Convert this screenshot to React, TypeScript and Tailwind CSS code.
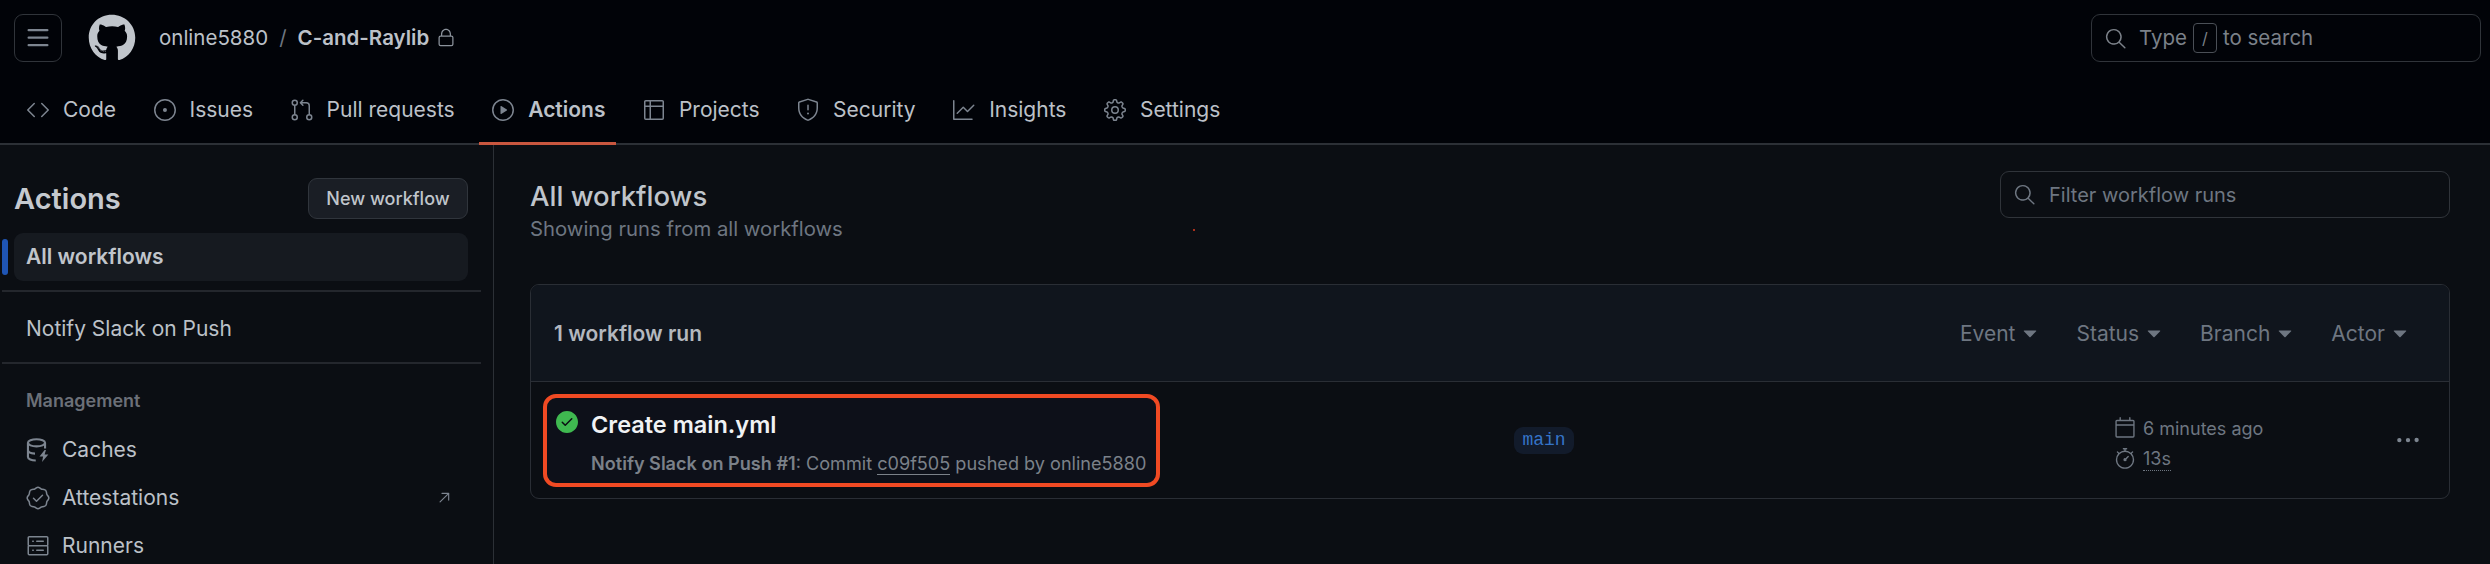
import React from 'react';
import { FaGithub } from 'react-icons/fa';
import {
  GoCalendar,
  GoCheckCircleFill,
  GoCode,
  GoGear,
  GoGitPullRequest,
  GoGraph,
  GoIssueOpened,
  GoKebabHorizontal,
  GoLock,
  GoArrowUpRight,
  GoPlay,
  GoSearch,
  GoServer,
  GoShield,
  GoStopwatch,
  GoTable,
  GoTriangleDown,
  GoVerified,
} from 'react-icons/go';

function MenuBars() {
  return (
    <svg width="24" height="24" viewBox="0 0 16 16" fill="currentColor">
      <path d="M1 2.75A.75.75 0 0 1 1.75 2h12.5a.75.75 0 0 1 0 1.5H1.75A.75.75 0 0 1 1 2.75Zm0 5A.75.75 0 0 1 1.75 7h12.5a.75.75 0 0 1 0 1.5H1.75A.75.75 0 0 1 1 7.75ZM1.75 12h12.5a.75.75 0 0 1 0 1.5H1.75a.75.75 0 0 1 0-1.5Z" />
    </svg>
  );
}

// database with a bolt, react-icons has no octicon cache
function CacheIcon({ size, className }: { size: number; className?: string }) {
  return (
    <svg width={size} height={size} viewBox="0 0 16 16" fill="none" className={className}>
      <ellipse cx="7" cy="3.2" rx="5.7" ry="2.4" stroke="currentColor" strokeWidth="1.4" />
      <path d="M1.3 3.2v9.4c0 1.4 2.3 2.4 5.2 2.4M1.3 8c0 1.3 2 2.3 4.7 2.4M12.7 3.2V7" stroke="currentColor" strokeWidth="1.4" />
      <path d="M12.4 8 9 12.4h2.4L10.7 16l4.2-5h-2.5l.9-3h-.9Z" fill="currentColor" />
    </svg>
  );
}

const tabs = [
  { label: 'Code', icon: GoCode },
  { label: 'Issues', icon: GoIssueOpened },
  { label: 'Pull requests', icon: GoGitPullRequest },
  { label: 'Actions', icon: GoPlay, active: true },
  { label: 'Projects', icon: GoTable },
  { label: 'Security', icon: GoShield },
  { label: 'Insights', icon: GoGraph },
  { label: 'Settings', icon: GoGear },
];

const managementLinks = [
  { label: 'Caches', icon: CacheIcon },
  { label: 'Attestations', icon: GoVerified, external: true },
  { label: 'Runners', icon: GoServer },
];

const filters = ['Event', 'Status', 'Branch', 'Actor'];

function RepoHeader() {
  return (
    <div className="flex h-[76px] items-center pl-[14px] pr-[9px]">
      <button
        type="button"
        className="flex h-[48px] w-[48px] items-center justify-center rounded-[9px] border border-[#30343a] text-[#7d8590]"
      >
        <MenuBars />
      </button>
      <FaGithub size={48} className="ml-[26px] text-[#c0c5cb]" />
      <div className="ml-[23px] flex items-center text-[20.5px] text-[#bcc1c8]">
        <span>online5880</span>
        <span className="mx-[11px] text-[#6e7681]">/</span>
        <span className="font-semibold">C-and-Raylib</span>
        <GoLock size={20} className="ml-[7px] text-[#8b929b]" />
      </div>
      <div className="ml-auto flex h-[48px] w-[390px] items-center rounded-[9px] border border-[#30343a] pl-[12px] text-[20.5px] text-[#7b8189]">
        <GoSearch size={23} />
        <span className="ml-[12px]">Type</span>
        <span className="mx-[6px] flex h-[30px] w-[24px] items-center justify-center rounded-[4px] border border-[#4a4f56] text-[16px]">
          /
        </span>
        <span>to search</span>
      </div>
    </div>
  );
}

function RepoTabs() {
  return (
    <nav className="flex h-[69px] items-start gap-[13.5px] border-b-2 border-[#2c3036] pl-[14px]">
      {tabs.map((tab) => {
        const Icon = tab.icon;
        return (
          <a
            key={tab.label}
            className={`-mb-[2px] flex h-[69px] items-center gap-[13px] border-b-[3px] pl-[12px] pr-[11px] pt-[2px] text-[21px] text-[#bcc1c8] ${
              tab.active ? 'border-[#c9573f] font-semibold' : 'border-transparent'
            }`}
          >
            <Icon size={24} className="text-[#7d8590]" />
            <span>{tab.label}</span>
          </a>
        );
      })}
    </nav>
  );
}

function Sidebar() {
  return (
    <aside className="w-[494px] shrink-0 border-r border-[#2c3036] pr-[12px]">
      <div className="flex items-center justify-between pl-[14px] pr-[13px] pt-[32px]">
        <h2 className="text-[29px] font-semibold text-[#c5c9cf]">Actions</h2>
        <button
          type="button"
          className="flex h-[41px] w-[160px] items-center justify-center rounded-[9px] border border-[#30353c] bg-[#1a1e25] text-[18px] font-medium text-[#c0c5cb]"
        >
          New workflow
        </button>
      </div>
      <div className="relative ml-[14px] mr-[13px] mt-[12px] flex h-[48px] items-center rounded-[9px] bg-[#161a20] pl-[12px] text-[21px] font-semibold text-[#c0c5cb]">
        <span className="absolute -left-[12px] top-[6px] h-[36px] w-[6px] rounded-[3px] bg-[#1f55b5]" />
        All workflows
      </div>
      <div className="ml-[2px] mt-[9px] h-[2px] bg-[#24272d]" />
      <div className="flex h-[70px] items-center pl-[26px] pt-[5px] text-[21px] text-[#bcc1c8]">Notify Slack on Push</div>
      <div className="ml-[2px] h-[2px] bg-[#24272d]" />
      <div className="pl-[26px] pt-[23px] text-[18px] font-semibold text-[#6b7078]">Management</div>
      <ul className="mt-[12px]">
        {managementLinks.map((link) => {
          const Icon = link.icon;
          return (
            <li key={link.label} className="flex h-[48px] items-center pl-[26px] pr-[28px] text-[21px] text-[#bcc1c8]">
              <Icon size={24} className="text-[#7d8590]" />
              <span className="ml-[12px]">{link.label}</span>
              {link.external && <GoArrowUpRight size={18} className="ml-auto text-[#7d8590]" />}
            </li>
          );
        })}
      </ul>
    </aside>
  );
}

function WorkflowRun() {
  return (
    <div className="flex h-[116px] items-center pl-[12px] pr-[28px]">
      <div className="flex h-[93px] w-[617px] shrink-0 items-start gap-[12px] rounded-[13px] border-4 border-[#f04a23] bg-[#0d1019] pl-[8px] pt-[11px]">
        <GoCheckCircleFill size={24} className="mt-[1px] shrink-0 rounded-full bg-[radial-gradient(circle,#0b0e13_45%,transparent_46%)] text-[#3fb950]" />
        <div className="min-w-0">
          <div className="text-[23.5px] font-semibold leading-[32px] text-[#f0f2f4]">Create main.yml</div>
          <div className="mt-[10px] whitespace-nowrap text-[18.1px] leading-[24px] text-[#7b8189]">
            <span className="font-semibold">Notify Slack on Push #1</span>: Commit{' '}
            <span className="border-b border-[#7b8189]">c09f505</span> pushed by online5880
          </div>
        </div>
      </div>
      <span className="ml-[354px] flex h-[27px] w-[60px] shrink-0 items-center justify-center rounded-[9px] bg-[#121b2b] font-['Liberation_Mono',monospace] text-[18px] text-[#3574c8]">
        main
      </span>
      <div className="ml-[540px] pt-[7px] text-[18px] text-[#6e7681]">
        <div className="flex h-[30px] items-center gap-[7px]">
          <GoCalendar size={22} />
          <span>6 minutes ago</span>
        </div>
        <div className="mt-[1px] flex h-[30px] items-center gap-[7px]">
          <GoStopwatch size={22} />
          <span className="border-b border-dotted border-[#6e7681] leading-[22px]">13s</span>
        </div>
      </div>
      <GoKebabHorizontal size={26} className="ml-auto text-[#7d8590]" />
    </div>
  );
}

function WorkflowRuns() {
  return (
    <main className="relative min-w-0 flex-1 pl-[36px] pr-[40px]">
      <span className="absolute left-[699px] top-[84px] h-[2px] w-[2px] bg-[#a8301c]" />
      <div className="flex items-start justify-between pt-[26px]">
        <div className="mt-[6px]">
          <h1 className="text-[27.5px] font-medium leading-[38px] text-[#c0c5cb]">All workflows</h1>
          <p className="text-[20.3px] leading-[27px] text-[#6e7681]">Showing runs from all workflows</p>
        </div>
        <div className="flex h-[47px] w-[450px] items-center rounded-[9px] border border-[#30343a] pl-[12px] text-[20px] text-[#6e7681]">
          <GoSearch size={23} />
          <span className="ml-[13px]">Filter workflow runs</span>
        </div>
      </div>
      <section className="mt-[42px] overflow-hidden rounded-[9px] border border-[#2a2e35]">
        <header className="flex h-[97px] items-center border-b border-[#2a2e35] bg-[#10151d] pl-[23px] pr-[37px] pt-[2px]">
          <strong className="text-[21px] font-semibold text-[#b3b8bf]">1 workflow run</strong>
          <div className="ml-auto flex gap-[34px]">
            {filters.map((filter) => (
              <span key={filter} className="flex items-center gap-[3px] text-[21px] text-[#6e7681]">
                {filter}
                <GoTriangleDown size={24} />
              </span>
            ))}
          </div>
        </header>
        <WorkflowRun />
      </section>
    </main>
  );
}

export default function App() {
  return (
    <div className="h-[564px] w-[2490px] overflow-hidden bg-[#0b0e13] font-['Inter',sans-serif]">
      <div className="bg-[#010308]">
        <RepoHeader />
        <RepoTabs />
      </div>
      <div className="flex h-[419px]">
        <Sidebar />
        <WorkflowRuns />
      </div>
    </div>
  );
}
